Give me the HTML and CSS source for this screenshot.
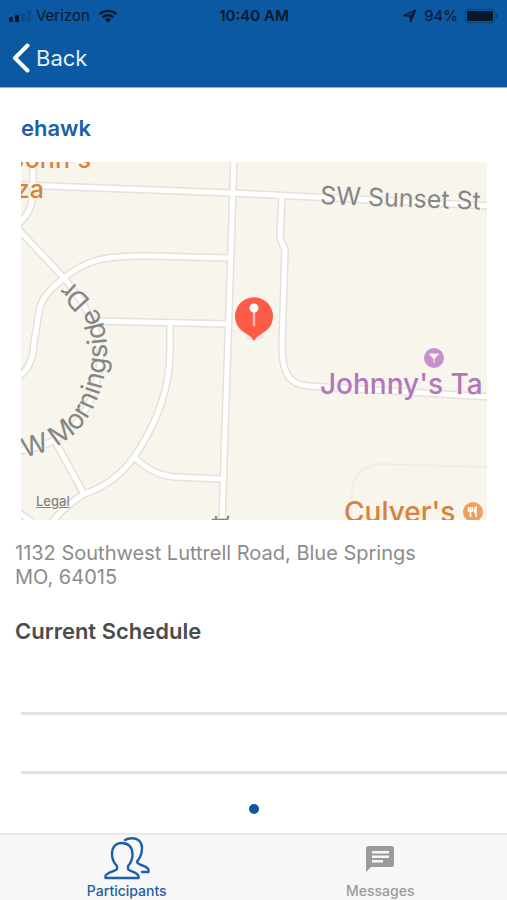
FILE: index.html
```html
<!DOCTYPE html>
<html lang="en">
<head>
    <meta charset="UTF-8">
    <meta name="viewport" content="width=device-width, initial-scale=1.0">
    <title>Participant</title>
    <link rel="stylesheet" href="styles.css">
</head>
<body>
    <header class="header">
        <div class="status-bar">
            <div class="status-left">
                <svg class="signal" width="22" height="12" viewBox="0 0 22 12">
                    <rect x="0" y="7" width="4" height="5" rx="1"/>
                    <rect x="6" y="5" width="4" height="7" rx="1"/>
                    <rect x="12" y="3" width="4" height="9" rx="1" opacity="0.2"/>
                    <rect x="18" y="0" width="4" height="12" rx="1" opacity="0.2"/>
                </svg>
                <span>Verizon</span>
                <svg class="wifi" width="20" height="14" viewBox="0 0 20 14">
                    <path d="M1.5 5.2a12.4 12.4 0 0 1 17 0M4.6 8.3a8 8 0 0 1 10.8 0" fill="none" stroke="currentColor" stroke-width="2.4"/>
                    <path d="M6.8 10.4a4.8 4.8 0 0 1 6.4 0L10 13.6z"/>
                </svg>
            </div>
            <span class="clock">10:40 AM</span>
            <div class="status-right">
                <svg width="14" height="14" viewBox="0 0 14 14">
                    <path d="M1 6.6 12.6 1.2 7.6 12.8 7 7.1z" fill="none" stroke="currentColor" stroke-width="1.5" stroke-linejoin="round"/>
                    <path d="M7 7 12.6 1.2 7.6 12.8z"/>
                </svg>
                <span>94%</span>
                <svg width="34" height="14" viewBox="0 0 34 14">
                    <rect x="0.5" y="0.5" width="29" height="13" rx="3" fill="none" stroke="currentColor" opacity="0.35"/>
                    <rect x="2" y="2" width="26" height="10" rx="1"/>
                    <path d="M31 4.5q3 2.5 0 5z" opacity="0.4"/>
                </svg>
            </div>
        </div>
        <a class="back" href="#">
            <svg width="18" height="30" viewBox="0 0 18 30">
                <path d="M15.5 2.5 3 15l12.5 12.5" fill="none" stroke="currentColor" stroke-width="4" stroke-linecap="round" stroke-linejoin="round"/>
            </svg>
            Back
        </a>
    </header>

    <main class="content">
        <h1 class="name">ehawk</h1>

        <div class="map">
            <svg class="map-canvas" viewBox="21 162 466 358" preserveAspectRatio="xMidYMid slice">
                <defs>
                    <g id="roads">
                        <path d="M33 158V190Q33 212 18 224"/>
                        <path d="M18 185 233 193 490 206"/>
                        <path d="M234 158 222 522"/>
                        <path d="M18 229 64 278 72 288Q104 330 100 365C94 405 76 444 18 451"/>
                        <path d="M230 258 150 256C105 255 86 260 64 278C42 295 39 304 37 325L34 342Q33 368 18 377"/>
                        <path d="M95 321 228 324"/>
                        <path d="M170 324V350Q170 405 134 457Q115 484 84 494Q66 505 52 522"/>
                        <path d="M134 457Q152 475 175 477L223 479"/>
                        <path d="M56 443 84 494"/>
                        <path d="M18 512 32 522"/>
                        <path d="M282 195 280 238 285 250 282 345C282 375 290 385 309 386L490 397"/>
                    </g>
                    <path id="morningside" d="M24 457C60 451 84 431 96 402C109 372 112 334 96 308Q84 290 56 268"/>
                </defs>
                <rect x="21" y="162" width="466" height="358" fill="#f8f5ed"/>
                <path class="path-minor" d="M352 500V494Q353 465 382 464L490 467"/>
                <use href="#roads" class="road-edge"/>
                <use href="#roads" class="road"/>

                <text class="label-street" x="320" y="204" transform="rotate(2 320 204)">SW Sunset St</text>
                <text class="label-street curved"><textPath href="#morningside">W Morningside Dr</textPath></text>
                <text class="label-street" text-anchor="end" transform="translate(229 515) rotate(-90)">St</text>

                <text class="label-food small" x="91" y="168" text-anchor="end">John's</text>
                <text class="label-food small" x="44" y="198" text-anchor="end">Pizza</text>
                <text class="label-food" x="344" y="522">Culver's</text>
                <text class="label-bar" x="320" y="394">Johnny's Ta</text>

                <circle cx="434" cy="358" r="10" fill="#c88fd0"/>
                <path d="M429.500 354h9l-4.500 5zM434 358v5" fill="#f8f5ed" stroke="#f8f5ed"/>
                <circle cx="473" cy="512" r="10" fill="#f0a05c"/>
                <path d="M468.500 507v4h4v-4M470.500 507v10M476 517v-10q-2 2-1 6" fill="none" stroke="#fff" stroke-width="1.500"/>

                <ellipse cx="255" cy="337" rx="9" ry="3" fill="#000" opacity="0.06"/>
                <path d="M254 341Q251 336 246 333.500A19 19 0 1 1 262 333.500Q257 336 254 341z" fill="#fc5b48"/>
                <path d="M254 310V326" stroke="#fdb5ab" stroke-width="2.500"/>
                <circle cx="254" cy="308" r="4.500" fill="#fff"/>
            </svg>
            <a class="legal" href="#">Legal</a>
        </div>

        <address class="address">
            1132 Southwest Luttrell Road, Blue Springs<br>
            MO, 64015
        </address>

        <h2 class="section-title">Current Schedule</h2>
        <ul class="schedule">
            <li></li>
            <li></li>
        </ul>
        <div class="page-dot"></div>
    </main>

    <nav class="tabs">
        <a class="tab active" href="#">
            <svg width="46" height="44" viewBox="0 0 46 44" fill="none" stroke="currentColor" stroke-width="2.400" stroke-linejoin="round" stroke-linecap="round">
                <path d="M18 6C12 6 8 10 8 17C8 22 10 26 13 29V32C13 34 2 35 1.500 39V41H34.500V39C34 35 24 34 24 32V29C27 26 28.500 22 28.500 17C28.500 10 24 6 18 6Z"/>
                <path d="M21 3C23 1.500 26 1.200 28 1.200C34 1.200 38 5 38 11C38 17 36 21 33 24.500C33 29 44 28 44.500 33V35H38"/>
            </svg>
            <span>Participants</span>
        </a>
        <a class="tab" href="#">
            <svg width="28" height="28" viewBox="0 0 28 28">
                <path fill="currentColor" fill-rule="evenodd" d="M2.500 1H25.500Q28 1 28 3.500V19.500Q28 22 25.500 22H5L0 27V3.500Q0 1 2.500 1ZM6 6V8.500H23V6ZM6 10.500V13H23V10.500ZM6 15V17.500H17V15Z"/>
            </svg>
            <span>Messages</span>
        </a>
    </nav>
</body>
</html>
```
FILE: styles.css
```css
* {
    margin: 0;
    padding: 0;
    box-sizing: border-box;
}

body {
    font-family: Inter, "Liberation Sans", sans-serif;
    background: #fff;
    min-height: 100vh;
    display: flex;
    flex-direction: column;
}

a {
    color: inherit;
    text-decoration: none;
}

svg {
    display: block;
}

.header {
    background: #0b58a3;
    border-bottom: 1px solid #8fb2d5;
    height: 88px;
}

.status-bar {
    display: grid;
    grid-template-columns: 1fr auto 1fr;
    align-items: center;
    height: 31px;
    padding: 0 8px 0 9px;
    font-size: 15px;
    color: #06182c;
    fill: currentColor;
}

.status-left,
.status-right {
    display: flex;
    align-items: center;
    gap: 7px;
}

.status-left {
    gap: 5px;
}

.status-right {
    justify-content: flex-end;
}

.wifi {
    margin-left: 3px;
}

.clock {
    font-weight: 600;
}

.back {
    display: inline-flex;
    align-items: center;
    gap: 6px;
    height: 54px;
    padding-left: 12px;
    font-size: 22px;
    color: #e3effb;
}

.back svg {
    color: #fff;
}

.content {
    flex: 1;
}

.name {
    margin: 26px 21px 19px;
    font-size: 22px;
    line-height: 29px;
    font-weight: 600;
    color: #1c5fa8;
}

.map {
    position: relative;
    margin: 0 20px 0 21px;
}

.map-canvas {
    width: 100%;
    height: auto;
}

.road-edge,
.road,
.path-minor {
    fill: none;
    stroke-linejoin: round;
}

.road-edge {
    stroke: #e5e1da;
    stroke-width: 8px;
}

.road {
    stroke: #fff;
    stroke-width: 5px;
}

.path-minor {
    stroke: #f1ede6;
    stroke-width: 2px;
}

.label-street,
.label-food,
.label-bar {
    font-size: 28px;
    paint-order: stroke;
    stroke: #f8f5ed;
    stroke-width: 2px;
}

.label-street {
    font-size: 25px;
    fill: #858585;
}

.label-street.curved {
    font-size: 27px;
}

.label-food {
    font-weight: 500;
    fill: #d9813a;
}

.label-food.small {
    font-size: 25px;
}

.label-bar {
    font-weight: 500;
    fill: #b176bb;
}

.legal {
    position: absolute;
    left: 15px;
    bottom: 11px;
    font-size: 13px;
    line-height: 16px;
    font-weight: 500;
    color: #858585;
    text-decoration: underline;
}

.address {
    margin: 21px 15px 0;
    font-size: 20px;
    line-height: 24px;
    font-style: normal;
    color: #8c8c8c;
}

.section-title {
    margin: 28px 15px 0;
    font-size: 22px;
    line-height: 28px;
    font-weight: 600;
    color: #4c4c4c;
}

.schedule {
    margin: 11px 0 0 21px;
    list-style: none;
}

.schedule li {
    height: 59px;
    border-bottom: 3px solid #e2e2e2;
}

.page-dot {
    width: 10px;
    height: 10px;
    margin: 30px auto 19px;
    border-radius: 50%;
    background: #0b58a3;
}

.tabs {
    display: flex;
    height: 68px;
    border-top: 2px solid #e9e9e9;
    background: #f7f7f7;
}

.tab {
    flex: 1;
    display: flex;
    flex-direction: column;
    align-items: center;
    justify-content: flex-end;
    gap: 9px;
    padding-bottom: 2px;
    font-size: 14px;
    line-height: 17px;
    font-weight: 500;
    color: #9b9b9b;
}

.tab.active {
    gap: 1px;
    color: #1c5fa8;
}
```
